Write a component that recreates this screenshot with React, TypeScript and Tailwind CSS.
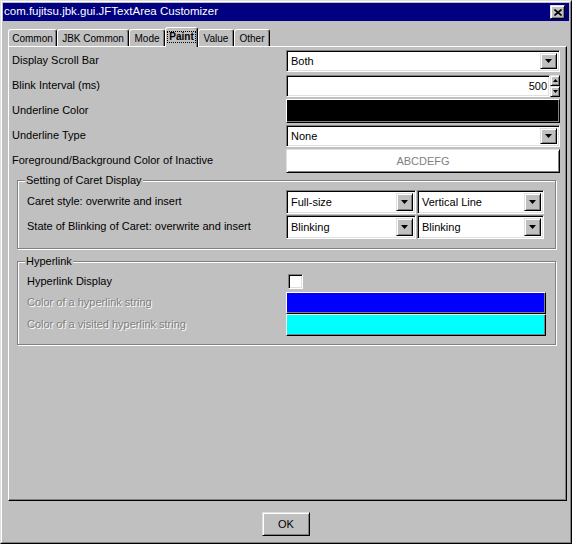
import React from "react";

const raised =
  "border border-t-[#dfdfdf] border-l-[#dfdfdf] border-r-black border-b-black shadow-[inset_1px_1px_0_#ffffff,inset_-1px_-1px_0_#808080]";
const sunken =
  "border border-t-[#808080] border-l-[#808080] border-r-white border-b-white shadow-[inset_1px_1px_0_#000000,inset_-1px_-1px_0_#dfdfdf]";
const swatch =
  "border border-t-white border-l-white border-r-black border-b-black shadow-[inset_-1px_-1px_0_#808080]";

function DownArrow() {
  return (
    <svg width="7" height="4" viewBox="0 0 7 4">
      <path d="M0 0h7L3.5 4z" fill="#000" />
    </svg>
  );
}

function Combo({ value, className }: { value: string; className: string }) {
  return (
    <div className={`flex bg-white p-[1px] ${sunken} ${className}`}>
      <span className="flex-1 flex items-center pl-[3px] leading-none">{value}</span>
      <span className={`w-[17px] my-[1px] mr-[1px] flex items-center justify-center bg-[#c0c0c0] ${raised}`}>
        <DownArrow />
      </span>
    </div>
  );
}

function Tab({ label, className }: { label: string; className: string }) {
  return (
    <div
      className={`h-[17px] flex items-center justify-center pt-[1px] text-[10px] rounded-t-[3px] border border-b-0 border-t-white border-l-white border-r-black shadow-[inset_-1px_0_0_#808080] ${className}`}
    >
      {label}
    </div>
  );
}

function Group({ title, className, children }: { title: string; className: string; children: React.ReactNode }) {
  return (
    <div
      className={`relative ml-[8px] w-[539px] border border-[#808080] shadow-[inset_1px_1px_0_#ffffff,1px_1px_0_#ffffff] ${className}`}
    >
      <span className="absolute left-[7px] -top-[7px] px-[1px] leading-[13px] bg-[#c0c0c0]">{title}</span>
      {children}
    </div>
  );
}

export default function App() {
  return (
    <div className="w-[572px] h-[544px] flex flex-col bg-[#c0c0c0] border border-t-[#dfdfdf] border-l-[#dfdfdf] border-r-black border-b-black font-['Liberation_Sans',Arial,sans-serif] text-[11px] text-black">
      <div className="flex-1 flex flex-col border border-t-white border-l-white border-r-[#808080] border-b-[#808080]">
        {/* Title bar */}
        <div className="mx-[1px] mt-[1px] h-[18px] bg-[#000080] flex items-center justify-between pl-[1px] pr-[4px]">
          <span className="text-white text-[11.5px] leading-none">com.fujitsu.jbk.gui.JFTextArea Customizer</span>
          <span className={`w-[15px] h-[14px] flex items-center justify-center bg-[#c0c0c0] ${raised}`}>
            <svg width="8" height="7" viewBox="0 0 8 7">
              <path d="M0.5 0.5L7.5 6.5M7.5 0.5L0.5 6.5" stroke="#000" strokeWidth="1.6" />
            </svg>
          </span>
        </div>

        {/* Tabs */}
        <div className="mt-[6px] h-[19px] flex items-end pl-[6px]">
          <Tab label="Common" className="w-[49px]" />
          <Tab label="JBK Common" className="w-[72px]" />
          <Tab label="Mode" className="w-[36px]" />
          <div className="relative z-10 w-[33px] h-[20px] -mb-[1px] flex items-center justify-center pb-[1px] bg-[#c0c0c0] text-[10px] font-bold rounded-t-[3px] border border-b-0 border-t-white border-l-white border-r-black shadow-[inset_-1px_0_0_#808080]">
            <span className="px-[1px] leading-[10px] outline outline-1 outline-dotted outline-black">Paint</span>
          </div>
          <Tab label="Value" className="w-[36px]" />
          <Tab label="Other" className="w-[36px]" />
        </div>

        {/* Panel */}
        <div className="ml-[6px] mr-[3px] h-[455px] flex flex-col pt-[3px] border border-t-white border-l-white border-r-black border-b-black shadow-[inset_-1px_-1px_0_#808080]">
          <div className="flex items-center h-[22px]">
            <span className="w-[277px] pl-[3px] pb-[2px]">Display Scroll Bar</span>
            <Combo value="Both" className="w-[274px] h-[22px]" />
          </div>

          <div className="flex items-center h-[22px] mt-[3px]">
            <span className="w-[277px] pl-[3px] pb-[2px]">Blink Interval (ms)</span>
            <div className={`w-[264px] h-[22px] bg-white flex items-center justify-end pr-[2px] ${sunken}`}>500</div>
            <div className="w-[10px] h-[22px] flex flex-col">
              <span className={`h-[11px] flex items-center justify-center bg-[#c0c0c0] ${raised}`}>
                <svg width="5" height="3" viewBox="0 0 5 3">
                  <path d="M0 3h5L2.5 0z" fill="#000" />
                </svg>
              </span>
              <span className={`h-[11px] flex items-center justify-center bg-[#c0c0c0] ${raised}`}>
                <svg width="5" height="3" viewBox="0 0 5 3">
                  <path d="M0 0h5L2.5 3z" fill="#000" />
                </svg>
              </span>
            </div>
          </div>

          <div className="flex items-center h-[24px] mt-[2px]">
            <span className="w-[277px] pl-[3px] pb-[2px]">Underline Color</span>
            <div className={`w-[274px] h-[24px] bg-black ${swatch}`} />
          </div>

          <div className="flex items-center h-[22px] mt-[2px]">
            <span className="w-[277px] pl-[3px] pb-[2px]">Underline Type</span>
            <Combo value="None" className="w-[274px] h-[22px]" />
          </div>

          <div className="flex items-center h-[24px] mt-[2px]">
            <span className="w-[277px] pl-[3px] pb-[2px]">Foreground/Background Color of Inactive</span>
            <div className={`w-[274px] h-[24px] bg-white flex items-center justify-center text-[#808080] ${raised}`}>
              ABCDEFG
            </div>
          </div>

          <Group title="Setting of Caret Display" className="mt-[7px] h-[69px] pt-[9px]">
            <div className="flex items-center h-[24px]">
              <span className="w-[268px] pl-[9px] pb-[2px]">Caret style: overwrite and insert</span>
              <Combo value="Full-size" className="w-[130px] h-[24px]" />
              <Combo value="Vertical Line" className="ml-[1px] w-[127px] h-[24px]" />
            </div>
            <div className="flex items-center h-[24px] mt-[1px]">
              <span className="w-[268px] pl-[9px] pb-[2px]">State of Blinking of Caret: overwrite and insert</span>
              <Combo value="Blinking" className="w-[130px] h-[24px]" />
              <Combo value="Blinking" className="ml-[1px] w-[127px] h-[24px]" />
            </div>
          </Group>

          <Group title="Hyperlink" className="mt-[12px] h-[84px] pt-[12px]">
            <div className="flex items-center h-[15px]">
              <span className="w-[268px] pl-[9px] pb-[1px]">Hyperlink Display</span>
              <span className={`ml-[2px] w-[15px] h-[15px] bg-white ${sunken}`} />
            </div>
            <div className="flex items-center h-[22px] mt-[3px]">
              <span className="w-[268px] pl-[9px] pb-[1px] text-[#808080] [text-shadow:1px_1px_0_#ffffff]">
                Color of a hyperlink string
              </span>
              <div className={`w-[260px] h-[22px] bg-[#0000ff] ${swatch}`} />
            </div>
            <div className="flex items-center h-[22px]">
              <span className="w-[268px] pl-[9px] pb-[1px] text-[#808080] [text-shadow:1px_1px_0_#ffffff]">
                Color of a visited hyperlink string
              </span>
              <div className={`w-[260px] h-[22px] bg-[#00ffff] ${swatch}`} />
            </div>
          </Group>
        </div>

        {/* Footer */}
        <div className="flex justify-center mt-[11px]">
          <button className={`w-[48px] h-[24px] bg-[#c0c0c0] flex items-center justify-center ${raised}`}>OK</button>
        </div>
      </div>
    </div>
  );
}
